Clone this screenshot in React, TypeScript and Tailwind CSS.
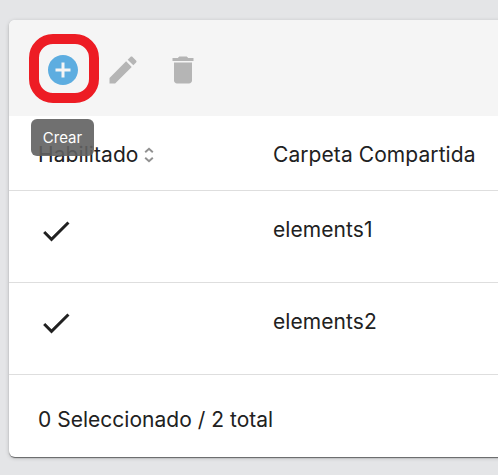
import React from "react";

const rows = ["elements1", "elements2"];

function Icon({ d, className }: { d: string; className: string }) {
  return (
    <svg viewBox="0 0 24 24" fill="currentColor" className={`size-9 shrink-0 ${className}`}>
      <path d={d} />
    </svg>
  );
}

const ADD =
  "M12 2C6.48 2 2 6.48 2 12s4.48 10 10 10 10-4.48 10-10S17.52 2 12 2zm5 11h-4v4h-2v-4H7v-2h4V7h2v4h4v2z";
const EDIT =
  "M3 17.25V21h3.75L17.81 9.94l-3.75-3.75L3 17.25zM20.71 7.04c.39-.39.39-1.02 0-1.41l-2.34-2.34c-.39-.39-1.02-.39-1.41 0l-1.83 1.83 3.75 3.75 1.83-1.83z";
const TRASH = "M6 19c0 1.1.9 2 2 2h8c1.1 0 2-.9 2-2V7H6v12zM19 4h-3.5l-1-1h-5l-1 1H5v2h14V4z";
const CHECK = "M9 16.17L4.83 12l-1.42 1.41L9 19 21 7l-1.41-1.41z";

export default function App() {
  return (
    <div className="h-[475px] w-[498px] overflow-hidden bg-[#e4e5e7] pt-5 pl-[9px] font-['Inter',sans-serif] text-[21px] leading-8 tracking-[0.08px] text-[#212121]">
      <div className="h-[437px] w-[520px] overflow-hidden rounded-[6px] bg-white shadow-[0_2px_1px_-1px_rgba(0,0,0,0.3),0_1px_1px_0_rgba(0,0,0,0.28),0_1px_4px_0_rgba(0,0,0,0.2)]">
        <div className="flex h-24 items-center gap-6 bg-[#f5f5f5] pt-1 pl-9">
          <button className="relative flex">
            <Icon d={ADD} className="text-[#5dade0]" />
            <span className="absolute -top-[18px] -left-4 h-[69px] w-[70px] rounded-[24px] border-10 border-[#ed1c24]" />
            <span className="absolute top-[67px] -left-[14px] flex h-[37px] w-[63px] items-center justify-center rounded-[6px] bg-[#616161]/90 text-[15px] leading-none tracking-normal text-white">
              Crear
            </span>
          </button>
          <Icon d={EDIT} className="text-[#b5b5b5]" />
          <Icon d={TRASH} className="text-[#b5b5b5]" />
        </div>
        <div className="flex h-[75px] items-center border-b border-[#dedede] pt-[3px] pl-[29px]">
          <div className="flex w-[235px] items-center gap-[5px]">
            <span>Habilitado</span>
            <svg viewBox="0 0 10 16" className="h-4 w-[10px]" fill="none" stroke="#919191" strokeWidth="2">
              <path d="M1.2 5.2 5 1.8 8.8 5.2M1.2 10.8 5 14.2 8.8 10.8" />
            </svg>
          </div>
          <span>Carpeta Compartida</span>
        </div>
        {rows.map((name) => (
          <div key={name} className="flex h-[92px] border-b border-[#dedede] pt-[22px] pl-[29px]">
            <div className="w-[235px]">
              <Icon d={CHECK} className="text-[#212121]" />
            </div>
            <span className="mt-px">{name}</span>
          </div>
        ))}
        <div className="flex h-[82px] items-center pt-[7px] pl-[29px] tracking-[0.02px]">
          0 Seleccionado / 2 total
        </div>
      </div>
    </div>
  );
}
